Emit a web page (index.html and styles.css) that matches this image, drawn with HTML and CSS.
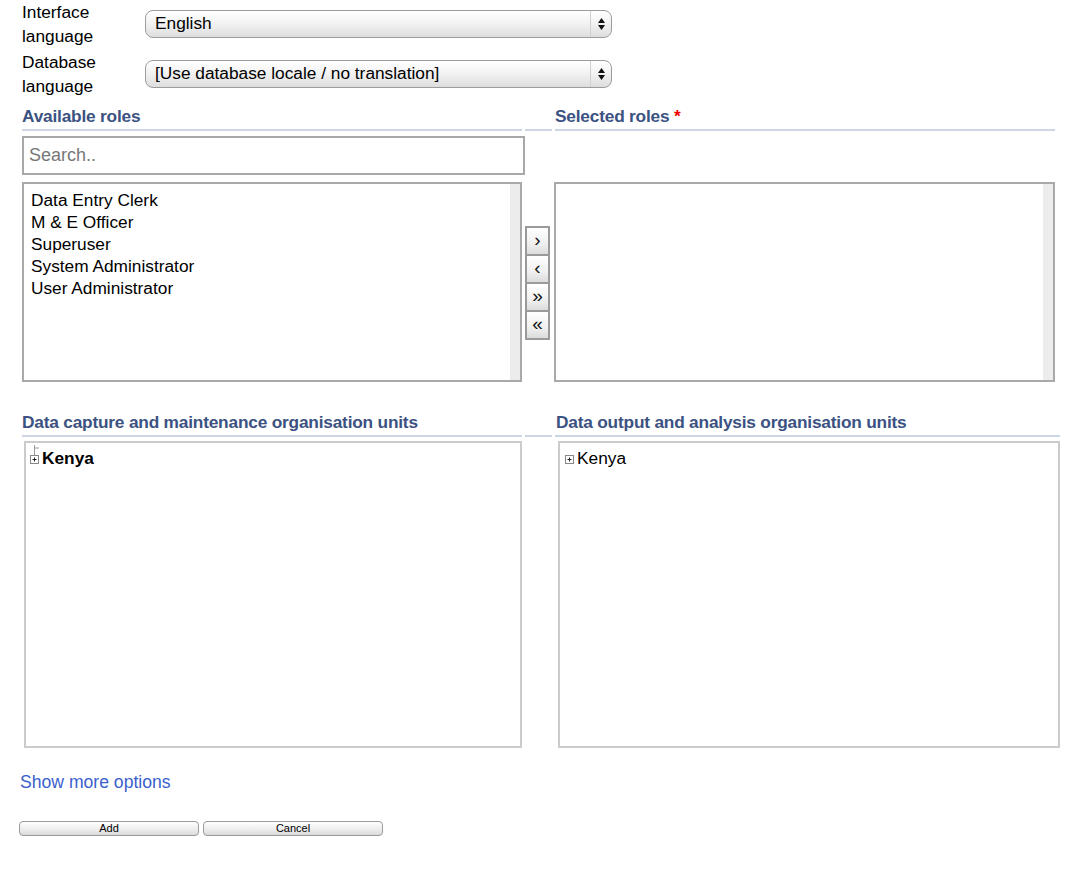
FILE: index.html
```html
<!DOCTYPE html>
<html>
<head>
<meta charset="utf-8">
<link rel="stylesheet" href="styles.css">
</head>
<body>
<div class="page">
  <div class="lang-grid">
    <div class="lang-label">Interface<br>language</div>
    <div class="select"><span class="select-text">English</span><span class="select-arrows"><svg width="9" height="14" viewBox="0 0 9 14"><path d="M4.5 1 L8 6 H1 Z M4.5 13 L8 8 H1 Z" fill="#111"/></svg></span></div>
    <div class="lang-label">Database<br>language</div>
    <div class="select"><span class="select-text">[Use database locale / no translation]</span><span class="select-arrows"><svg width="9" height="14" viewBox="0 0 9 14"><path d="M4.5 1 L8 6 H1 Z M4.5 13 L8 8 H1 Z" fill="#111"/></svg></span></div>
  </div>

  <div class="roles-grid">
    <div class="sec-head">Available roles</div>
    <div class="sec-head"></div>
    <div class="sec-head">Selected roles <span class="req">*</span></div>

    <div class="search-cell"><div class="search">Search..</div></div>
    <div></div>
    <div></div>

    <div class="listbox">
      <div class="list-items">
        <div>Data Entry Clerk</div>
        <div>M &amp; E Officer</div>
        <div>Superuser</div>
        <div>System Administrator</div>
        <div>User Administrator</div>
      </div>
      <div class="track"></div>
    </div>
    <div class="move-cell">
      <div class="move-btns">
        <div class="move-btn">›</div>
        <div class="move-btn">‹</div>
        <div class="move-btn">»</div>
        <div class="move-btn">«</div>
      </div>
    </div>
    <div class="listbox listbox-right">
      <div class="list-items"></div>
      <div class="track"></div>
    </div>
  </div>

  <div class="org-grid">
    <div class="sec-head">Data capture and maintenance organisation units</div>
    <div class="sec-head"></div>
    <div class="sec-head sec-head-right">Data output and analysis organisation units</div>

    <div class="tree tree-left">
      <div class="tree-node">
        <svg class="tree-icon" width="11" height="22" viewBox="0 0 11 22"><path d="M5.5 0 V10 M5.5 3 H10" stroke="#999" stroke-width="1" fill="none"/><rect x="1.5" y="10.5" width="8" height="8" fill="#fff" stroke="#888"/><path d="M3.5 14.5 H7.5 M5.5 12.5 V16.5" stroke="#222" stroke-width="1"/></svg>
        <b>Kenya</b>
      </div>
    </div>
    <div></div>
    <div class="tree tree-right">
      <div class="tree-node">
        <svg class="tree-icon" width="11" height="22" viewBox="0 0 11 22"><rect x="1.5" y="10.5" width="8" height="8" fill="#fff" stroke="#888"/><path d="M3.5 14.5 H7.5 M5.5 12.5 V16.5" stroke="#222" stroke-width="1"/></svg>
        <span>Kenya</span>
      </div>
    </div>
  </div>

  <div class="more-link">Show more options</div>

  <div class="form-btns">
    <div class="form-btn">Add</div>
    <div class="form-btn">Cancel</div>
  </div>
</div>
</body>
</html>
```
FILE: styles.css
```css
html, body {
  margin: 0;
  padding: 0;
  background: #fff;
}
body {
  font-family: "Liberation Sans", Arial, Helvetica, sans-serif;
  font-size: 17.3px;
  color: #000;
}
.page {
  padding-left: 22px;
}
.lang-grid {
  display: grid;
  grid-template-columns: 123px 467px;
  row-gap: 2px;
  align-items: center;
}
.lang-label {
  line-height: 24px;
}
.select {
  height: 28px;
  box-sizing: border-box;
  border: 1.5px solid #9c9c9c;
  border-radius: 8px;
  background: linear-gradient(#ffffff, #f3f3f3 45%, #dedede);
  display: flex;
  align-items: center;
  box-shadow: inset 0 1px 0 #fff;
}
.select-text {
  flex: 1;
  padding-left: 9px;
  padding-bottom: 2px;
}
.select-arrows {
  width: 20px;
  height: 100%;
  border-left: 1px solid #cfcfcf;
  display: flex;
  align-items: center;
  justify-content: center;
}
.roles-grid {
  display: grid;
  grid-template-columns: 500px 27px 500px;
  column-gap: 3px;
  margin-top: 6px;
}
.org-grid {
  display: grid;
  grid-template-columns: 500px 27px 505px;
  column-gap: 3px;
  margin-top: 28px;
}
.sec-head {
  font-weight: bold;
  color: #3b5282;
  line-height: 24px;
  height: 24px;
  padding-bottom: 1px;
  border-bottom: 2px solid #cdd6e3;
  letter-spacing: -0.2px;
  white-space: nowrap;
}
.sec-head-right {
  padding-left: 1px;
}
.req {
  color: #e00;
}
.search-cell {
  margin-top: 5px;
}
.search {
  width: 503px;
  height: 39px;
  box-sizing: border-box;
  border: 2px solid #a8a8a8;
  color: #777;
  font-size: 18px;
  line-height: 35px;
  padding-left: 5px;
}
.listbox {
  margin-top: 7px;
  height: 200px;
  box-sizing: border-box;
  border: 2px solid #a9a9a9;
  display: flex;
}
.listbox-right {
  margin-left: -1px;
}
.list-items {
  flex: 1;
  padding: 5px 0 0 7px;
  line-height: 22px;
}
.track {
  width: 10px;
  background: #ececec;
}
.move-cell {
  margin-top: 7px;
  display: flex;
  align-items: center;
  justify-content: flex-start;
}
.move-btns {
  border: 2px solid #9a9a9a;
  display: flex;
  flex-direction: column;
  gap: 2px;
  background: #9a9a9a;
  margin-top: 2px;
}
.move-btn {
  width: 21px;
  height: 26px;
  background: linear-gradient(#ffffff, #f0f0f0 60%, #dcdcdc);
  display: flex;
  align-items: center;
  justify-content: center;
  font-size: 19px;
  line-height: 1;
  color: #111;
  padding-bottom: 3px;
  box-sizing: border-box;
}
.tree {
  margin-top: 4px;
  height: 307px;
  box-sizing: border-box;
  border: 2px solid #cbcbcb;
}
.tree-left {
  margin-left: 2px;
}
.tree-right {
  margin-left: 3px;
}
.tree-node {
  display: flex;
  align-items: flex-start;
  padding: 1px 0 0 3px;
  line-height: 28px;
}
.tree-right .tree-node {
  padding-left: 4px;
}
.tree-icon {
  display: block;
  margin-top: 1px;
  margin-right: 2px;
}
.more-link {
  margin-top: 22px;
  margin-left: -2px;
  line-height: 24px;
  color: #3a60cc;
  font-size: 17.6px;
}
.form-btns {
  display: flex;
  gap: 4px;
  margin-top: 27px;
  margin-left: -3px;
}
.form-btn {
  width: 180px;
  height: 15px;
  box-sizing: border-box;
  border: 1px solid #9a9a9a;
  border-radius: 4px;
  background: linear-gradient(#ffffff, #ececec 60%, #dadada);
  font-size: 11px;
  line-height: 13px;
  text-align: center;
  color: #000;
}
```
